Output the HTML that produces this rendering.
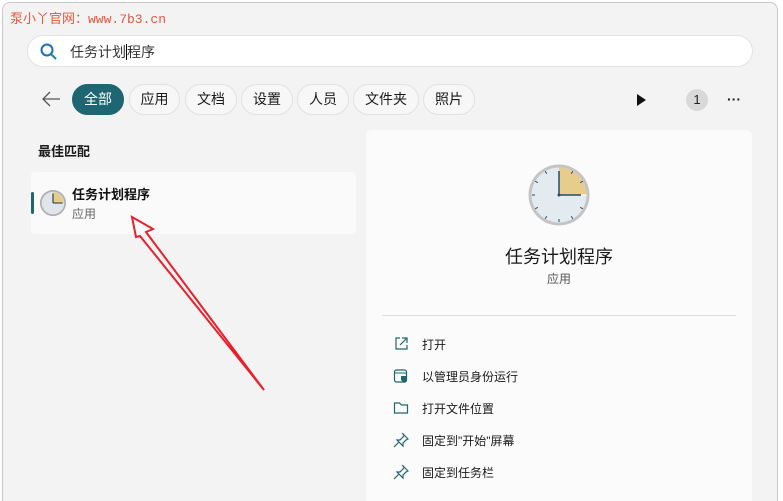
<!DOCTYPE html>
<html style="overflow:hidden;width:783px;height:501px"><head><meta charset="utf-8"><style>
*{margin:0;padding:0;box-sizing:border-box}
html,body{width:783px;height:501px;overflow:hidden}
body{background:#fff;font-family:"Liberation Sans","Noto Sans CJK SC",sans-serif;position:relative}
.win{position:absolute;left:2px;top:2px;width:776px;height:499px;background:#f3f3f3;border:1px solid #c9c9c9;border-bottom:none;border-radius:8px 8px 0 0}
.a{position:absolute}
.chip{position:absolute;top:84px;height:31px;border:1px solid #e2e2e2;border-radius:16px;background:#f7f7f7;font-size:14px;color:#1a1a1a;text-align:center;line-height:29px}
.menu{position:absolute;left:393px;font-size:12px;color:#1a1a1a}
.menu span{position:absolute;left:29px;top:0;white-space:nowrap}
</style></head><body>
<div class="win"></div>
<div class="a" style="left:10px;top:8px;font-size:13px;color:#e8553f;font-family:'Liberation Mono','Noto Sans CJK SC',monospace">泵小丫官网：www.7b3.cn</div>
<div class="a" style="left:27px;top:35px;width:726px;height:32px;background:#fff;border:1px solid #e3e3e3;border-radius:16px"></div>
<svg class="a" style="left:39px;top:42px" width="20" height="20"><circle cx="8" cy="8" r="5.5" fill="none" stroke="#1a6fc0" stroke-width="2"/><path d="M12 12l5 5" stroke="#1a8a9a" stroke-width="2"/></svg>
<div class="a" style="left:70px;top:42px;font-size:14px;color:#333">任务计划<span style="border-left:1px solid #000"></span>程序</div>
<svg class="a" style="left:40px;top:90px" width="22" height="18"><path d="M20 9H3M10 2L3 9l7 7" fill="none" stroke="#555" stroke-width="1.3"/></svg>
<div class="chip" style="left:72px;width:52px;background:#1e6672;border-color:#1e6672;color:#fff">全部</div>
<div class="chip" style="left:129px;width:51px">应用</div>
<div class="chip" style="left:185px;width:52px">文档</div>
<div class="chip" style="left:241px;width:52px">设置</div>
<div class="chip" style="left:297px;width:52px">人员</div>
<div class="chip" style="left:353px;width:66px">文件夹</div>
<div class="chip" style="left:423px;width:52px">照片</div>
<svg class="a" style="left:636px;top:93px" width="12" height="14"><path d="M1 1L10 7 1 13z" fill="#111"/></svg>
<div class="a" style="left:686px;top:89px;width:22px;height:22px;border-radius:11px;background:#d9d9d9;font-size:13px;text-align:center;line-height:22px;color:#222">1</div>
<div class="a" style="left:727px;top:91px;font-size:14px;color:#222;font-weight:bold">···</div>
<div class="a" style="left:38px;top:141px;font-size:13px;font-weight:bold;color:#1a1a1a">最佳匹配</div>
<div class="a" style="left:31px;top:172px;width:325px;height:62px;background:#fafafa;border-radius:4px"></div>
<div class="a" style="left:31px;top:192px;width:3px;height:22px;background:#1e6672;border-radius:2px"></div>
<svg class="a" style="left:40px;top:190px" width="26" height="26" viewBox="0 0 60 60"><circle cx="30" cy="30" r="28" fill="#dfe5ea" stroke="#b0b0b0" stroke-width="4"/><path d="M30 30V5A25 25 0 0 1 55 30z" fill="#e7cd8c"/><path d="M30 30V8M30 30h22" stroke="#234" stroke-width="2.5"/></svg>
<div class="a" style="left:72px;top:184px;font-size:13px;font-weight:bold;color:#111">任务计划程序</div>
<div class="a" style="left:72px;top:205px;font-size:12px;color:#666">应用</div>
<div class="a" style="left:366px;top:130px;width:386px;height:371px;background:#fbfbfb;border-radius:6px 6px 0 0"></div>
<svg class="a" style="left:527px;top:163px" width="64" height="64" viewBox="0 0 64 64"><circle cx="32" cy="32" r="30.5" fill="#c4c4c4"/><circle cx="32" cy="32" r="27.5" fill="#e3eaf0"/><path d="M32 32V4.5A27.5 27.5 0 0 1 59.5 32z" fill="#e7cd8c"/><path d="M32 32h27.5" stroke="#fff" stroke-width="1"/><g stroke="#2a4a6a" stroke-width="1"><path d="M45.8 8.2l-1.5 2.6M55.8 18.2l-2.6 1.5M55.8 45.8l-2.6-1.5M45.8 55.8l-1.5-2.6M32 59v-3M18.2 55.8l1.5-2.6M8.2 45.8l2.6-1.5M5 32h3M8.2 18.2l2.6 1.5M18.2 8.2l1.5 2.6"/></g><path d="M32 32V8M32 32h22" stroke="#2a4a6a" stroke-width="1.5"/><circle cx="32" cy="32" r="1.5" fill="#2a4a6a"/></svg>
<div class="a" style="left:366px;top:243px;width:386px;text-align:center;font-size:18px;color:#1a1a1a">任务计划程序</div>
<div class="a" style="left:366px;top:270px;width:386px;text-align:center;font-size:12px;color:#555">应用</div>
<div class="a" style="left:382px;top:315px;width:354px;height:1px;background:#e0e0e0"></div>
<div class="menu" style="top:336px"><svg width="16" height="16"><path d="M7 2H3v11h11V9M9 2h5v5M14 2L7 9" fill="none" stroke="#1e6672" stroke-width="1.2"/></svg><span>打开</span></div>
<div class="menu" style="top:368px"><svg width="16" height="16"><rect x="1.5" y="2" width="12" height="12" rx="2" fill="none" stroke="#1e6672" stroke-width="1.2"/><path d="M1.5 5h12" stroke="#1e6672"/><path d="M8 8h6v4l-3 3-3-3z" fill="#1e6672"/></svg><span>以管理员身份运行</span></div>
<div class="menu" style="top:400px"><svg width="16" height="16"><path d="M1.5 3h5l2 2h6v8h-13z" fill="none" stroke="#1e6672" stroke-width="1.2"/></svg><span>打开文件位置</span></div>
<div class="menu" style="top:432px"><svg width="16" height="16"><path d="M9 1l6 6-2 1-3 3v3L4 8h3l3-3 1-2zM6 10l-5 5" fill="none" stroke="#1e6672" stroke-width="1.2"/></svg><span>固定到"开始"屏幕</span></div>
<div class="menu" style="top:464px"><svg width="16" height="16"><path d="M9 1l6 6-2 1-3 3v3L4 8h3l3-3 1-2zM6 10l-5 5" fill="none" stroke="#1e6672" stroke-width="1.2"/></svg><span>固定到任务栏</span></div>
<svg class="a" style="left:0;top:0" width="783" height="501"><path d="M132 217L153 229 146 232 264 390 140 236 136 237z" fill="none" stroke="#e8202a" stroke-width="2" stroke-linejoin="miter"/></svg>
</body></html>
